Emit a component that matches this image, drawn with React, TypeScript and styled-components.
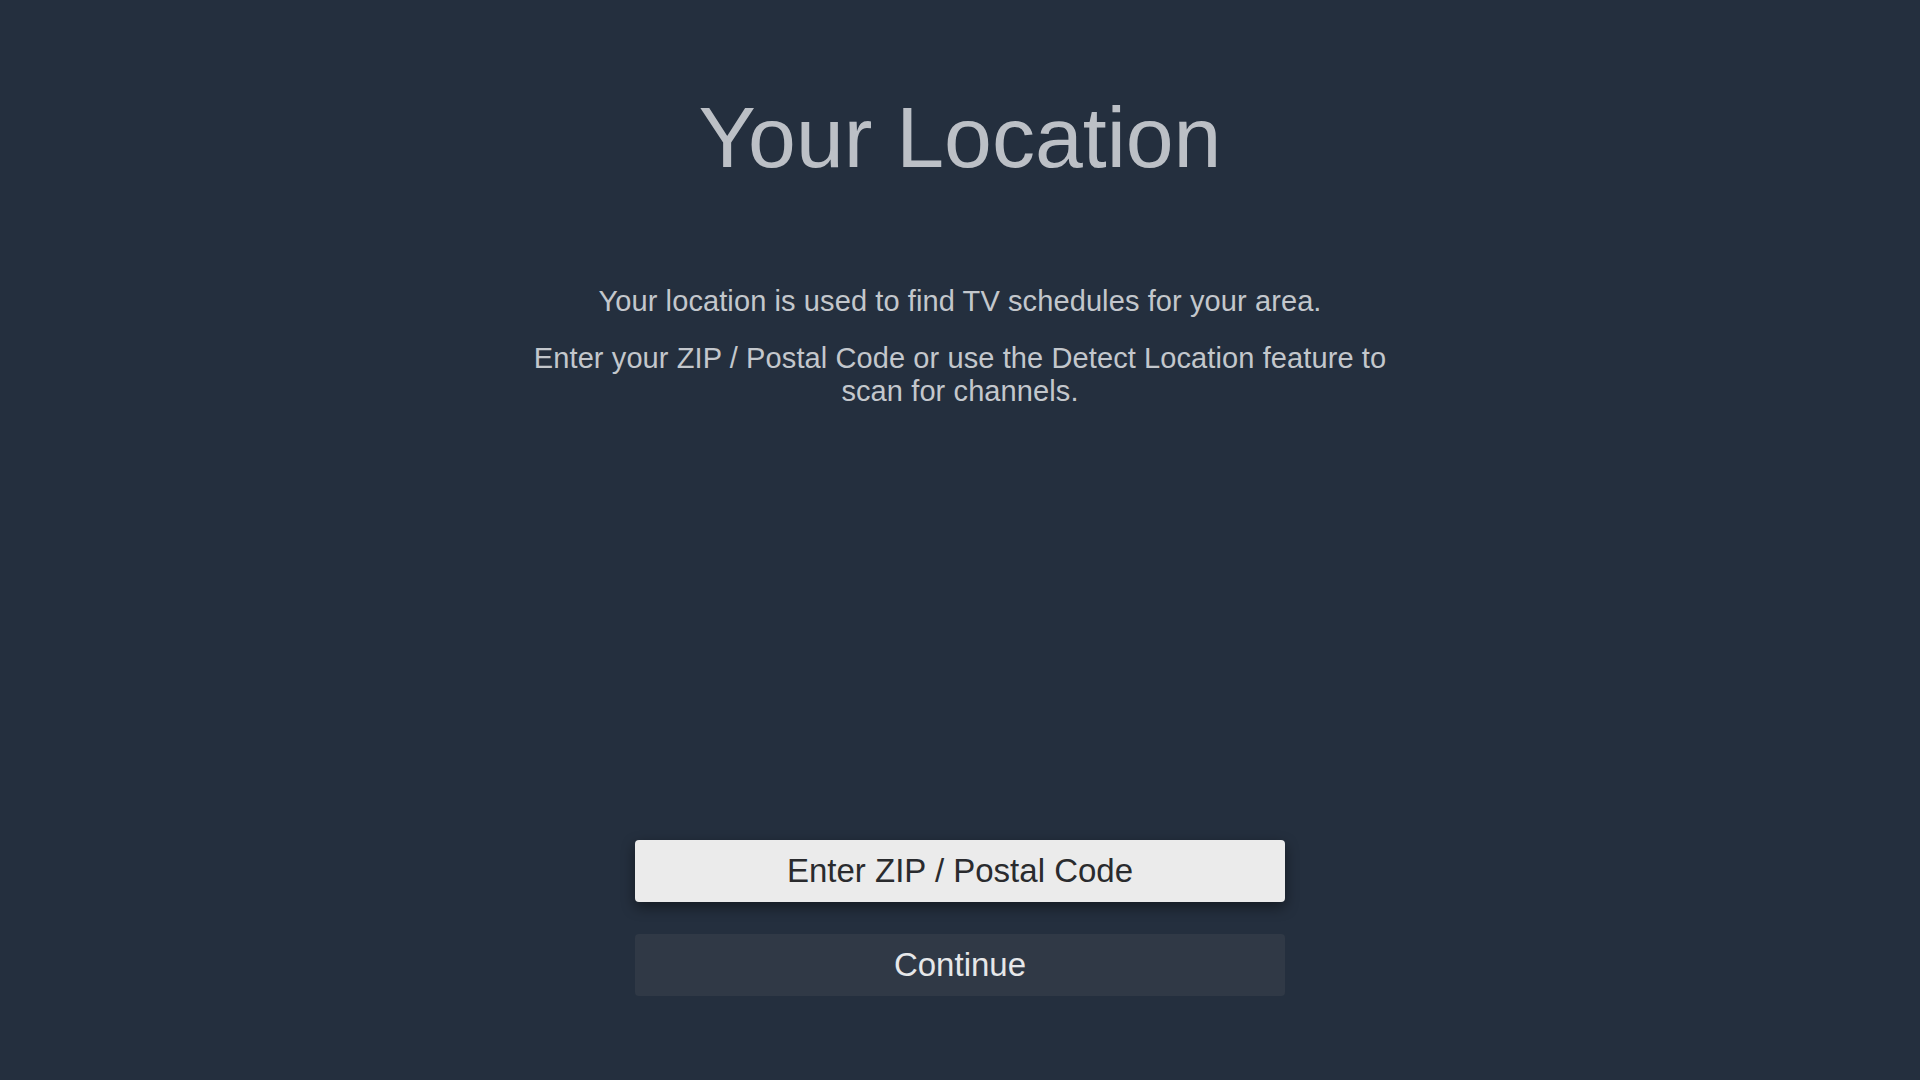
import React from 'react';
import styled, { createGlobalStyle } from 'styled-components';

const GlobalStyle = createGlobalStyle`
  html, body {
    margin: 0;
    padding: 0;
    background-color: #242f3e;
  }

  body {
    font-family: 'Liberation Sans', Arial, sans-serif;
  }
`;

const LocationPage: React.FC = () => {
  return (
    <PageWrap>
      <Title>Your Location</Title>
      <Description>
        <p>Your location is used to find TV schedules for your area.</p>
        <p>
          Enter your ZIP / Postal Code or use the Detect Location feature to
          scan for channels.
        </p>
      </Description>
      <ButtonGroup>
        <ActionBtn type='button' $focused>
          Enter ZIP / Postal Code
        </ActionBtn>
        <ActionBtn type='button'>Continue</ActionBtn>
      </ButtonGroup>
    </PageWrap>
  );
};

const App: React.FC = () => (
  <>
    <GlobalStyle />
    <LocationPage />
  </>
);

const PageWrap = styled.main`
  display: flex;
  flex-direction: column;
  align-items: center;
  box-sizing: border-box;
  height: 1080px;
  padding: 94px 0 84px;
  background-color: #242f3e;
`;

const Title = styled.h1`
  margin: 0;
  font-size: 86px;
  line-height: 86px;
  font-weight: 400;
  color: #bcc0c6;
`;

const Description = styled.div`
  display: flex;
  flex-direction: column;
  gap: 24px;
  width: 900px;
  margin-top: 105px;
  text-align: center;

  p {
    margin: 0;
    font-size: 29px;
    line-height: 33px;
    letter-spacing: 0.1px;
    color: #c3c7cc;
  }
`;

const ButtonGroup = styled.div`
  display: flex;
  flex-direction: column;
  gap: 32px;
  margin-top: auto;
`;

const ActionBtn = styled.button<{ $focused?: boolean }>`
  width: 650px;
  height: 62px;
  padding: 0;
  border: none;
  border-radius: 4px;
  font-family: 'Liberation Sans', Arial, sans-serif;
  font-size: 33px;
  color: ${({ $focused }) => ($focused ? '#2a2b2e' : '#e6e7e9')};
  background-color: ${({ $focused }) => ($focused ? '#ebebeb' : '#303946')};
  box-shadow: ${({ $focused }) =>
    $focused ? '0 5px 14px rgba(0, 0, 0, 0.45)' : 'none'};
  cursor: pointer;
`;

export default App;
